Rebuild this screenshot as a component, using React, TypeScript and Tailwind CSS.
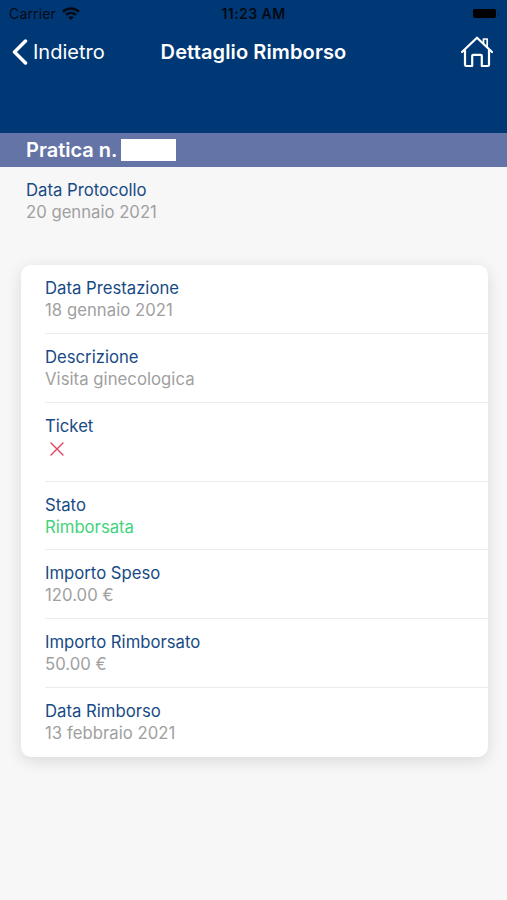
import clsx from 'clsx';

interface RowProps {
  label: string;
  value?: string;
  valueClass?: string;
  className?: string;
  children?: React.ReactNode;
}

function WifiIcon() {
  return (
    <svg className="ml-[6px] h-[14px] w-[18px]" viewBox="0 0 18 14" fill="none" stroke="#050a14" strokeWidth="2.600">
      <path d="M1 4.700C5.500.4 12.500.4 17 4.700" />
      <path d="M4 8C6.900 5.300 11.100 5.300 14 8" />
      <path d="M6.200 10.200C7.900 8.900 10.100 8.900 11.800 10.200L9 13.100Z" fill="#050a14" stroke="none" />
    </svg>
  );
}

function HomeIcon() {
  return (
    <svg className="h-[32px] w-[34px]" viewBox="0 0 34 32" fill="none" stroke="white" strokeWidth="2.200" strokeLinecap="round" strokeLinejoin="round">
      <path d="M2 16L17 1.700L32 16" />
      <path d="M5 14V28.700Q5 30 6.300 30H12.200V19.800Q12.200 18.800 13.200 18.800H20.800Q21.800 18.800 21.800 19.800V30H27.700Q29 30 29 28.700V14" />
      <path d="M23.500 7V3H27.200V10.500" strokeWidth="1.700" />
    </svg>
  );
}

function Row({ label, value, valueClass, className, children }: RowProps) {
  return (
    <div className={clsx('ml-[24px] border-[#ebebeb]', className)}>
      <div className="text-[16.7px] leading-[22px] text-[#174a84]">{label}</div>
      {value && <div className={clsx('text-[16.7px] leading-[22px]', valueClass || 'tracking-[0.04px] text-[#a0a0a0]')}>{value}</div>}
      {children}
    </div>
  );
}

export default function App() {
  return (
    <div className="h-[900px] w-[507px] overflow-hidden bg-[#f7f7f7] font-['Inter',sans-serif]">
      <header className="h-[133px] bg-[#003876]">
        <div className="grid h-[27px] grid-cols-3 items-center text-[14px] text-[#050a14]">
          <div className="flex items-center pl-[9px]">
            <span className="tracking-[0.15px]">Carrier</span>
            <WifiIcon />
          </div>
          <div className="text-center font-semibold tracking-[0.45px]">11:23 AM</div>
          <div className="flex items-center justify-end pr-[8px]">
            <div className="h-[9px] w-[23px] rounded-[2px] bg-black" />
            <div className="ml-[2px] h-[4px] w-[1px] bg-[#02254d]" />
          </div>
        </div>
        <div className="grid h-[50px] grid-cols-[1fr_auto_1fr] items-center text-white">
          <div className="flex items-center pl-[12px]">
            <svg className="h-[26px] w-[16px]" viewBox="0 0 16 26" fill="none" stroke="white" strokeWidth="3.500" strokeLinecap="round" strokeLinejoin="round">
              <path d="M13.500 2L2.500 13L13.500 24" />
            </svg>
            <span className="ml-[5px] text-[20px]">Indietro</span>
          </div>
          <h1 className="text-[20px] font-semibold tracking-[0.12px]">Dettaglio Rimborso</h1>
          <div className="flex justify-end pr-[13px]">
            <HomeIcon />
          </div>
        </div>
      </header>

      <div className="flex h-[34px] items-center bg-[#6574a6] pl-[26px] text-white">
        <span className="text-[20px] font-semibold">Pratica n.</span>
        <div className="ml-[4px] h-[22px] w-[55px] bg-white" />
      </div>

      <section className="h-[98px] pl-[26px] pt-[12px] text-[16.7px] leading-[22px]">
        <div className="text-[#174a84]">Data Protocollo</div>
        <div className="text-[#a0a0a0]">20 gennaio 2021</div>
      </section>

      <main className="ml-[21px] h-[492px] w-[467px] rounded-[10px] bg-white shadow-[0_4px_16px_rgba(0,0,0,0.12)]">
        <Row label="Data Prestazione" value="18 gennaio 2021" className="h-[69px] border-b pt-[12px]" />
        <Row label="Descrizione" value="Visita ginecologica" className="h-[69px] border-b pt-[12px]" />
        <Row label="Ticket" className="h-[79px] border-b pt-[12px]">
          <svg className="ml-[5px] mt-[5px] h-[14px] w-[14px]" viewBox="0 0 14 14" stroke="#e0405f" strokeWidth="1.400" strokeLinecap="round">
            <path d="M1 1L13 13M13 1L1 13" />
          </svg>
        </Row>
        <Row label="Stato" value="Rimborsata" valueClass="text-[#41d37c]" className="h-[68px] border-b pt-[12px]" />
        <Row label="Importo Speso" value="120.00 €" className="h-[69px] border-b pt-[12px]" />
        <Row label="Importo Rimborsato" value="50.00 €" className="h-[69px] border-b pt-[12px]" />
        <Row label="Data Rimborso" value="13 febbraio 2021" className="h-[69px] pt-[12px]" />
      </main>
    </div>
  );
}
